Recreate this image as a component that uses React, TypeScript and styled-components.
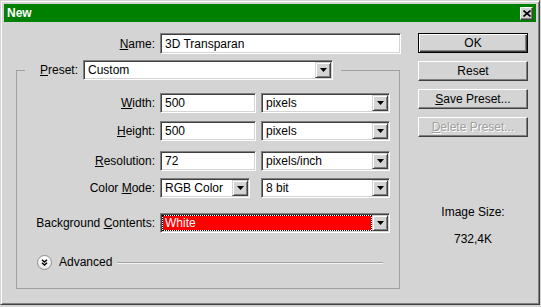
import React from 'react';
import styled, { createGlobalStyle } from 'styled-components';

const FACE = '#d4d4d4';

const Global = createGlobalStyle`
  html, body { margin: 0; padding: 0; background: ${FACE}; }
  body {
    font-family: "Liberation Sans", Arial, sans-serif;
    font-size: 12px;
    line-height: 14px;
    color: #000;
  }
  u { text-decoration: underline; text-underline-offset: 1px; }
`;

const Dialog = styled.div`
  box-sizing: border-box;
  width: 540px;
  height: 305px;
  border: 1px solid;
  border-color: ${FACE} #404040 #404040 ${FACE};
  box-shadow: inset 1px 1px #fff, inset -1px -1px #808080;
  padding: 3px;
  background: ${FACE};
  display: flex;
  flex-direction: column;
`;

const TitleBar = styled.div`
  height: 18px;
  flex: none;
  background: #008000;
  display: flex;
  align-items: center;
  justify-content: space-between;
  padding: 0 3px;
  color: #fff;
  font-weight: bold;
  font-size: 12px;
`;

const CloseBtn = styled.div`
  box-sizing: border-box;
  width: 13px;
  height: 13px;
  background: ${FACE};
  border: 1px solid;
  border-color: #fff #404040 #404040 #fff;
  box-shadow: inset -1px -1px #808080;
  display: flex;
  align-items: center;
  justify-content: center;
`;

const Main = styled.div`
  display: flex;
  padding-top: 11px;
`;

const LeftCol = styled.div`
  width: 397px;
  display: flex;
  flex-direction: column;
`;

const RightCol = styled.div`
  width: 110px;
  margin-left: 17px;
  display: flex;
  flex-direction: column;
`;

const NameRow = styled.div`
  display: flex;
  align-items: center;
  gap: 5px;
`;

const Label = styled.div<{ $w: number }>`
  width: ${p => p.$w}px;
  flex: none;
  text-align: right;
  white-space: nowrap;
`;

const Slot = styled.div`
  width: 96px;
  flex: none;
  display: flex;
`;

const Sunken = styled.div<{ $w: number; $h?: number }>`
  box-sizing: border-box;
  width: ${p => p.$w}px;
  height: ${p => p.$h ?? 20}px;
  flex: none;
  background: #fff;
  border: 1px solid;
  border-color: #808080 #fff #fff #808080;
  box-shadow: inset 1px 1px #404040, inset -1px -1px ${FACE};
  display: flex;
  align-items: stretch;
`;

const FieldText = styled.div`
  flex: 1;
  display: flex;
  align-items: center;
  padding-left: 4px;
  white-space: nowrap;
  overflow: hidden;
`;

const SelValue = styled.div<{ $hl?: boolean }>`
  flex: 1;
  display: flex;
  align-items: center;
  margin: ${p => (p.$hl ? '2px 1px 2px 2px' : '1px')};
  padding-left: ${p => (p.$hl ? '2px' : '3px')};
  background: ${p => (p.$hl ? '#ff0000' : 'transparent')};
  color: ${p => (p.$hl ? '#fff' : '#000')};
  outline: ${p => (p.$hl ? '1px dotted #000' : 'none')};
  white-space: nowrap;
  overflow: hidden;
`;

const ArrowBtn = styled.div`
  box-sizing: border-box;
  width: 16px;
  margin: 1px 1px 1px 0;
  flex: none;
  background: ${FACE};
  border: 1px solid;
  border-color: ${FACE} #404040 #404040 ${FACE};
  box-shadow: inset 1px 1px #fff, inset -1px -1px #808080;
  display: flex;
  align-items: center;
  justify-content: center;
`;

const Group = styled.fieldset`
  box-sizing: border-box;
  width: 384px;
  min-inline-size: 0;
  margin: 6px 0 0 12px;
  padding: 0 0 18px 0;
  border: 1px solid #a0a0a0;
`;

const Legend = styled.legend`
  margin-left: 8px;
  padding: 0 8px 0 13px;
`;

const LegendInner = styled.div`
  display: flex;
  align-items: center;
  height: 20px;
  gap: 5px;
`;

const Row = styled.div<{ $mt: number }>`
  display: flex;
  align-items: center;
  gap: 5px;
  height: 20px;
  margin-top: ${p => p.$mt}px;
`;

const AdvancedRow = styled.div`
  display: flex;
  align-items: center;
  height: 16px;
  margin-top: 21px;
  padding: 0 16px 0 20px;
`;

const AdvText = styled.span`
  margin-left: 7px;
`;

const AdvLine = styled.div`
  flex: 1;
  height: 1px;
  margin-left: 5px;
  background: #a0a0a0;
  box-shadow: 0 1px #f4f4f4;
`;

const ButtonStack = styled.div`
  display: flex;
  flex-direction: column;
  gap: 8px;
`;

const Btn = styled.div<{ $default?: boolean; $disabled?: boolean }>`
  box-sizing: border-box;
  height: 20px;
  display: flex;
  align-items: center;
  justify-content: center;
  background: ${FACE};
  border: 1px solid;
  border-color: ${p => (p.$default ? '#000' : '#fff #404040 #404040 #fff')};
  box-shadow: ${p =>
    p.$default
      ? 'inset 1px 1px #fff, inset -1px -1px #404040, inset -2px -2px #808080'
      : 'inset -1px -1px #808080'};
  color: ${p => (p.$disabled ? '#a0a0a0' : '#000')};
  text-shadow: ${p => (p.$disabled ? '1px 1px #fff' : 'none')};
  white-space: nowrap;
`;

const Info = styled.div`
  margin-top: 68px;
  text-align: center;
`;

const InfoValue = styled.div`
  margin-top: 13px;
  text-align: center;
`;

const DownArrow = () => (
  <svg width="7" height="4" viewBox="0 0 7 4">
    <path d="M0 0 H7 L3.5 4 Z" fill="#000" />
  </svg>
);

const Select: React.FC<{ w: number; value: string; hl?: boolean }> = ({ w, value, hl }) => (
  <Sunken $w={w}>
    <SelValue $hl={hl}>{value}</SelValue>
    <ArrowBtn>
      <DownArrow />
    </ArrowBtn>
  </Sunken>
);

const TextField: React.FC<{ w: number; h?: number; value: string }> = ({ w, h, value }) => (
  <Sunken $w={w} $h={h}>
    <FieldText>{value}</FieldText>
  </Sunken>
);

const AdvancedIcon = () => (
  <svg width="15" height="15" viewBox="0 0 15 15">
    <defs>
      <linearGradient id="advg" x1="0" y1="0" x2="0" y2="1">
        <stop offset="0" stopColor="#ffffff" />
        <stop offset="1" stopColor="#e6e6e6" />
      </linearGradient>
    </defs>
    <circle cx="7.5" cy="7.5" r="7" fill="url(#advg)" stroke="#8c8c8c" strokeWidth="1" />
    <path d="M5 4.8 L7.5 7 L10 4.8 M5 7.8 L7.5 10 L10 7.8" fill="none" stroke="#000" strokeWidth="1.4" />
  </svg>
);

const CloseIcon = () => (
  <svg width="8" height="7" viewBox="0 0 8 7">
    <path d="M0.5 0.5 L7.5 6.5 M7.5 0.5 L0.5 6.5" stroke="#000" strokeWidth="1.6" />
  </svg>
);

export default function App() {
  return (
    <>
      <Global />
      <Dialog>
        <TitleBar>
          <span>New</span>
          <CloseBtn>
            <CloseIcon />
          </CloseBtn>
        </TitleBar>
        <Main>
          <LeftCol>
            <NameRow>
              <Label $w={151}>
                <u>N</u>ame:
              </Label>
              <TextField w={241} h={21} value="3D Transparan" />
            </NameRow>
            <Group>
              <Legend>
                <LegendInner>
                  <Label $w={40}>
                    <u>P</u>reset:
                  </Label>
                  <Select w={250} value="Custom" />
                </LegendInner>
              </Legend>
              <Row $mt={13}>
                <Label $w={138}>
                  <u>W</u>idth:
                </Label>
                <TextField w={96} value="500" />
                <Select w={129} value="pixels" />
              </Row>
              <Row $mt={8}>
                <Label $w={138}>
                  <u>H</u>eight:
                </Label>
                <TextField w={96} value="500" />
                <Select w={129} value="pixels" />
              </Row>
              <Row $mt={10}>
                <Label $w={138}>
                  <u>R</u>esolution:
                </Label>
                <TextField w={96} value="72" />
                <Select w={129} value="pixels/inch" />
              </Row>
              <Row $mt={7}>
                <Label $w={138}>
                  Color <u>M</u>ode:
                </Label>
                <Slot>
                  <Select w={90} value="RGB Color" />
                </Slot>
                <Select w={129} value="8 bit" />
              </Row>
              <Row $mt={15}>
                <Label $w={138}>
                  Background <u>C</u>ontents:
                </Label>
                <Select w={230} value="White" hl />
              </Row>
              <AdvancedRow>
                <AdvancedIcon />
                <AdvText>Advanced</AdvText>
                <AdvLine />
              </AdvancedRow>
            </Group>
          </LeftCol>
          <RightCol>
            <ButtonStack>
              <Btn $default>OK</Btn>
              <Btn>Reset</Btn>
              <Btn>
                <span>
                  <u>S</u>ave Preset...
                </span>
              </Btn>
              <Btn $disabled>
                <span>
                  <u>D</u>elete Preset...
                </span>
              </Btn>
            </ButtonStack>
            <Info>Image Size:</Info>
            <InfoValue>732,4K</InfoValue>
          </RightCol>
        </Main>
      </Dialog>
    </>
  );
}
